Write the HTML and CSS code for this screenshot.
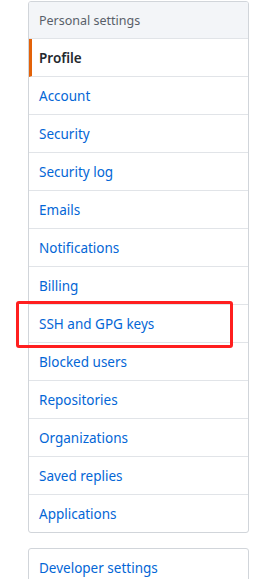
FILE: index.html
```html
<!DOCTYPE html>
<html>
<head>
    <meta charset="utf-8" />
    <title>Settings</title>
    <meta name="viewport" content="width=device-width, initial-scale=1">
    <link rel="stylesheet" href="styles.css">
</head>
<body>
    <div id="sidebar">
        <nav class="menu">
            <h3 class="menu-heading">Personal settings</h3>
            <a class="menu-item selected" href="#">Profile</a>
            <a class="menu-item" href="#">Account</a>
            <a class="menu-item" href="#">Security</a>
            <a class="menu-item" href="#">Security log</a>
            <a class="menu-item" href="#">Emails</a>
            <a class="menu-item" href="#">Notifications</a>
            <a class="menu-item" href="#">Billing</a>
            <a class="menu-item" href="#">SSH and GPG keys</a>
            <a class="menu-item" href="#">Blocked users</a>
            <a class="menu-item" href="#">Repositories</a>
            <a class="menu-item" href="#">Organizations</a>
            <a class="menu-item" href="#">Saved replies</a>
            <a class="menu-item" href="#">Applications</a>
        </nav>
        <nav class="menu">
            <a class="menu-item" href="#">Developer settings</a>
        </nav>
        <div class="highlight"></div>
    </div>
</body>
</html>
```

FILE: styles.css
```css
body{
    margin: 0;
    font-family: "Segoe UI", "Noto Sans", sans-serif;
    font-size: 13.5px;
    background-color: #fff;
}
#sidebar{
    position: relative;
    width: 221px;
    padding: 1px 0 0 28px;
}
.menu{
    border: 1px solid #d1d5da;
    border-radius: 3px;
    margin-bottom: 15px;
    overflow: hidden;
}
.menu-heading{
    margin: 0;
    padding: 9px 10px 7px;
    font-size: 12.5px;
    font-weight: normal;
    line-height: 20px;
    color: #586069;
    background-color: #f3f5f8;
    border-bottom: 1px solid #e1e4e8;
}
.menu-item{
    display: block;
    padding: 9px 10px 7px;
    line-height: 21px;
    color: #0366d6;
    text-decoration: none;
    border-bottom: 1px solid #e1e4e8;
}
.menu-item:last-child{
    border-bottom: 0;
}
.selected{
    color: #24292e;
    font-weight: 600;
    padding-left: 7px;
    border-left: 3px solid #e36209;
}
.highlight{
    position: absolute;
    left: 16px;
    top: 301px;
    width: 211px;
    height: 41px;
    border: 3px solid #ff1f1f;
    border-radius: 3px;
}
```
